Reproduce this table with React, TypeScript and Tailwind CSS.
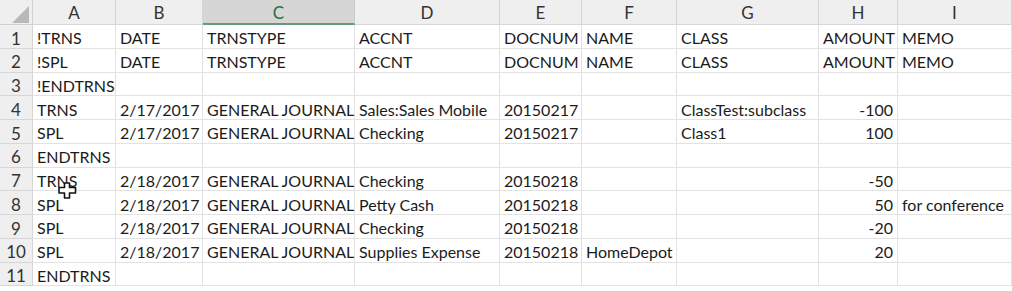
import React from "react";

const cols = ["A", "B", "C", "D", "E", "F", "G", "H", "I"];

type Cell = string | { v: string; r: true };

const rows: Cell[][] = [
  ["!TRNS", "DATE", "TRNSTYPE", "ACCNT", "DOCNUM", "NAME", "CLASS", "AMOUNT", "MEMO"],
  ["!SPL", "DATE", "TRNSTYPE", "ACCNT", "DOCNUM", "NAME", "CLASS", "AMOUNT", "MEMO"],
  ["!ENDTRNS", "", "", "", "", "", "", "", ""],
  ["TRNS", "2/17/2017", "GENERAL JOURNAL", "Sales:Sales Mobile", "20150217", "", "ClassTest:subclass", { v: "-100", r: true }, ""],
  ["SPL", "2/17/2017", "GENERAL JOURNAL", "Checking", "20150217", "", "Class1", { v: "100", r: true }, ""],
  ["ENDTRNS", "", "", "", "", "", "", "", ""],
  ["TRNS", "2/18/2017", "GENERAL JOURNAL", "Checking", "20150218", "", "", { v: "-50", r: true }, ""],
  ["SPL", "2/18/2017", "GENERAL JOURNAL", "Petty Cash", "20150218", "", "", { v: "50", r: true }, "for conference"],
  ["SPL", "2/18/2017", "GENERAL JOURNAL", "Checking", "20150218", "", "", { v: "-20", r: true }, ""],
  ["SPL", "2/18/2017", "GENERAL JOURNAL", "Supplies Expense", "20150218", "HomeDepot", "", { v: "20", r: true }, ""],
  ["ENDTRNS", "", "", "", "", "", "", "", ""],
];

export default function App() {
  return (
    <div
      className="relative w-[1012px] h-[291px] overflow-hidden bg-white text-[#1b1b1b]"
      style={{ fontFamily: "Lato, 'Open Sans', sans-serif" }}
    >
      <div className="grid grid-cols-[33px_83px_87px_152px_145px_82px_95px_142px_79px_114px] grid-rows-[25px_repeat(11,23.75px)] text-[16px]">
        {/* corner */}
        <div className="relative bg-[#efefef] border-r border-b border-[#d0d0d0]">
          <svg className="absolute left-[12px] top-[6px]" width="18" height="17" viewBox="0 0 18 17">
            <polygon points="17,0 17,17 0,17" fill="#b9b9b9" />
          </svg>
        </div>
        {cols.map((c) =>
          c === "C" ? (
            <div
              key={c}
              className="flex items-center justify-center pt-[2px] bg-[#d6d6d6] border-r border-[#c8c8c8] border-b-2 border-b-[#5f9c77] text-[#217346] text-[17px]"
            >
              {c}
            </div>
          ) : (
            <div
              key={c}
              className="flex items-center justify-center pt-[2px] bg-[#efefef] border-r border-b border-[#d6d6d6] text-[#333] text-[17px]"
            >
              {c}
            </div>
          )
        )}
        {rows.map((row, i) => (
          <React.Fragment key={i}>
            <div className="flex items-center justify-center pt-[4px] bg-[#efefef] border-r border-b border-[#d6d6d6] text-[#333] text-[17px]">
              {i + 1}
            </div>
            {row.map((cell, j) => {
              const isR = typeof cell !== "string";
              const text = typeof cell === "string" ? cell : cell.v;
              return (
                <div
                  key={j}
                  className={`flex items-center pt-[4px] whitespace-nowrap overflow-visible border-r border-b border-[#e2e2e2] ${
                    isR ? "justify-end pr-[4px]" : "pl-[4px]"
                  }`}
                >
                  {text}
                </div>
              );
            })}
          </React.Fragment>
        ))}
      </div>
      {/* cursor */}
      <svg
        className="absolute left-[58px] top-[182px]"
        width="19"
        height="17"
        viewBox="0 0 19 17"
      >
        <path
          d="M6.5 1 H11.5 V5.5 H17.5 V11 H11.5 V16 H6.5 V11 H1 V5.5 H6.5 Z"
          fill="#fff"
          stroke="#111"
          strokeWidth="1.6"
          strokeLinejoin="round"
        />
      </svg>
    </div>
  );
}
